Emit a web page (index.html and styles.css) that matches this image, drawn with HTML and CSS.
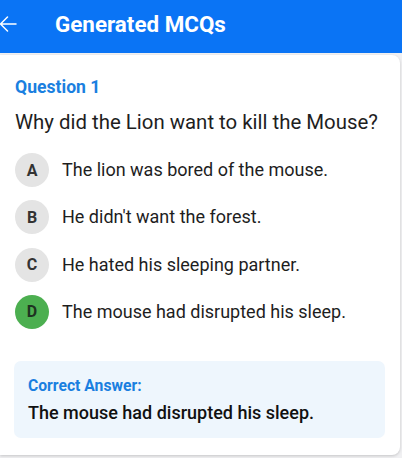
FILE: index.html
```html
<!DOCTYPE html>
<html>
<head>
<meta charset="utf-8">
<link rel="stylesheet" href="styles.css">
</head>
<body>
<header class="appbar">
  <svg class="back" width="18" height="18" viewBox="0 0 18 18"><path d="M17 9H1.5M8.5 2L1.5 9l7 7" fill="none" stroke="#fff" stroke-width="1.5" stroke-linecap="round" stroke-linejoin="round"/></svg>
  <h1 class="title">Generated MCQs</h1>
</header>
<main class="page">
  <section class="card">
    <div class="qlabel">Question 1</div>
    <div class="qtext">Why did the Lion want to kill the Mouse?</div>
    <ul class="options">
      <li class="opt"><span class="badge">A</span><span class="otext">The lion was bored of the mouse.</span></li>
      <li class="opt"><span class="badge">B</span><span class="otext">He didn't want the forest.</span></li>
      <li class="opt"><span class="badge">C</span><span class="otext">He hated his sleeping partner.</span></li>
      <li class="opt"><span class="badge correct">D</span><span class="otext">The mouse had disrupted his sleep.</span></li>
    </ul>
    <div class="answer">
      <div class="alabel">Correct Answer:</div>
      <div class="atext">The mouse had disrupted his sleep.</div>
    </div>
  </section>
</main>
</body>
</html>
```
FILE: styles.css
```css
* { box-sizing: border-box; }
html, body { margin: 0; padding: 0; }
body {
  width: 402px;
  height: 458px;
  overflow: hidden;
  background: #f0f0f2;
  font-family: Roboto, "Noto Sans", sans-serif;
  color: #1c1c1c;
}
.appbar {
  height: 53px;
  background: #0a74f5;
  display: flex;
  align-items: center;
  padding-left: 0;
}
.back { margin-left: -1px; margin-top: -6px; flex: none; }
.title {
  margin: 0 0 0 38px;
  margin-top: -6px;
  color: #fff;
  font-size: 22.4px;
  font-weight: 700;
}
.page { padding: 2px 2px 0 0; }
.card {
  background: #fff;
  border-radius: 0 8px 8px 0;
  box-shadow: 0 1px 3px rgba(0,0,0,0.18);
  padding: 21px 15px 17px 15px;
  height: 400px;
}
.qlabel {
  color: #1a7fe0;
  font-weight: 700;
  font-size: 17.6px;
  line-height: 22px;
}
.qtext {
  margin-top: 10px;
  font-size: 20.4px;
  line-height: 28px;
  color: #1e1e1e;
}
.options {
  list-style: none;
  margin: 17px 0 0 0;
  padding: 0;
  display: flex;
  flex-direction: column;
  gap: 13.3px;
}
.opt { display: flex; align-items: center; gap: 13px; }
.badge {
  width: 34px;
  height: 34px;
  border-radius: 50%;
  background: #e4e4e4;
  color: #333;
  font-weight: 700;
  font-size: 16px;
  display: flex;
  align-items: center;
  justify-content: center;
  flex: none;
}
.badge.correct { background: #4caf50; color: #1f3321; }
.otext { font-size: 18px; line-height: 22px; color: #1e1e1e; }
.answer {
  margin-top: 32px;
  margin-left: -1px;
  width: 371px;
  background: #eef6fd;
  border-radius: 7px;
  padding: 15px 14px 13px 14px;
}
.alabel {
  color: #1a7fe0;
  font-weight: 700;
  font-size: 15.7px;
  line-height: 20px;
}
.atext {
  margin-top: 5px;
  font-size: 18px;
  font-weight: 500;
  line-height: 24px;
  color: #111;
}
```
